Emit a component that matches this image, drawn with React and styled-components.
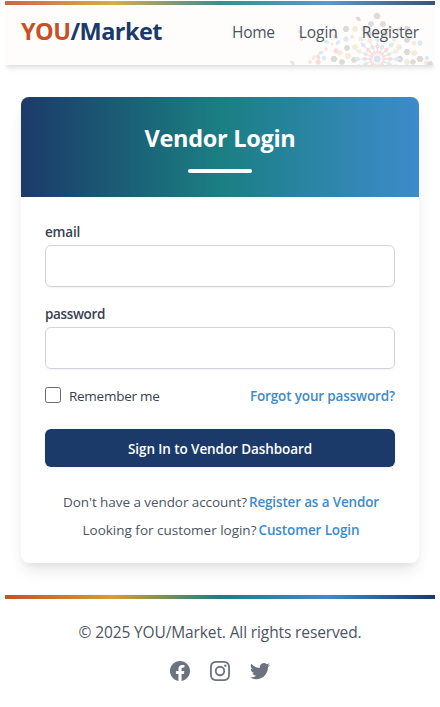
import React from "react";
import styled, { createGlobalStyle } from "styled-components";

const Global = createGlobalStyle`
  *, *::before, *::after { box-sizing: border-box; }
  html { background: #fff; overflow: hidden; }
  body {
    margin: 1px 5px 0;
    font-family: "Open Sans", "Noto Sans", sans-serif;
    color: #4b5563;
    -webkit-font-smoothing: antialiased;
  }
  a { color: inherit; text-decoration: none; }
  h1, p { margin: 0; }
`;

const Page = styled.div`
  display: flex;
  flex-direction: column;
  height: 706px;
`;

const Header = styled.header`
  position: relative;
  display: flex;
  align-items: center;
  justify-content: space-between;
  flex: none;
  height: 64px;
  padding: 0 16px;
  background: #fefdfb;
  box-shadow: 0 4px 6px -1px rgba(0, 0, 0, 0.1), 0 2px 4px -1px rgba(0, 0, 0, 0.06);
`;

const Stripe = styled.div`
  height: 4px;
  background: linear-gradient(to right, #c94f28, #d69e2e 25%, #1a7f82 50%, #3d8bcb 75%, #1c3a69);
`;

const HeaderStripe = styled(Stripe)`
  position: absolute;
  inset: 0 0 auto;
  opacity: 0.87;
`;

const Ornament = styled.svg`
  position: absolute;
  right: 0;
  bottom: 0;
  width: 150px;
  height: 60px;
  opacity: 0.19;
  pointer-events: none;
`;

const Logo = styled.a`
  display: flex;
  position: relative;
  padding-bottom: 5px;
  font-size: 23.5px;
  font-weight: 700;
  line-height: 32px;
`;

const LogoYou = styled.span`
  color: #c94f28;
  letter-spacing: -0.56px;
`;

const LogoMarket = styled.span`
  color: #1c3a69;
  letter-spacing: -0.57px;
`;

const Nav = styled.nav`
  position: relative;
  display: flex;
  gap: 24px;
  padding-bottom: 3px;
`;

const NavLink = styled.a`
  font-size: 15.5px;
  line-height: 24px;
  letter-spacing: ${(p) => p.$track}px;
`;

const Main = styled.main`
  flex: none;
  padding: 32px 16px;
`;

const Card = styled.section`
  height: 466px;
  overflow: hidden;
  border-radius: 8px;
  background: #fff;
  box-shadow: 0 10px 15px -3px rgba(0, 0, 0, 0.1), 0 4px 6px -2px rgba(0, 0, 0, 0.05);
`;

const CardHeader = styled.div`
  display: flex;
  flex-direction: column;
  align-items: center;
  height: 100px;
  padding-top: 24px;
  background: linear-gradient(to right, #1c3a69, #1a7f82 50%, #3d8bcb);
`;

const Title = styled.h1`
  color: #fff;
  font-size: 23.5px;
  font-weight: 700;
  line-height: 34px;
  height: 48px;
  letter-spacing: -0.29px;
`;

const TitleRule = styled.div`
  width: 64px;
  height: 4px;
  border-radius: 2px;
  background: #fff;
`;

const Form = styled.form`
  display: flex;
  flex-direction: column;
  padding: 24px;
`;

const Field = styled.label`
  display: block;
  height: 82px;
`;

const FieldLabel = styled.span`
  display: block;
  height: 24px;
  padding-top: 1px;
  color: #374151;
  font-size: 13.5px;
  font-weight: 600;
  line-height: 20px;
  letter-spacing: ${(p) => p.$track}px;
`;

const Input = styled.input`
  display: block;
  width: 100%;
  height: 42px;
  padding: 8px 12px;
  border: 1px solid #d1d5db;
  border-radius: 6px;
  background: #fff;
  font: inherit;
  box-shadow: 0 1px 2px rgba(0, 0, 0, 0.05);
`;

const Options = styled.div`
  display: flex;
  align-items: center;
  justify-content: space-between;
  height: 20px;
  padding-top: 2px;
  font-size: 13.5px;
  line-height: 20px;
`;

const Remember = styled.label`
  display: flex;
  align-items: center;
  gap: 8px;
  color: #374151;
  letter-spacing: -0.27px;
`;

const Checkbox = styled.input`
  appearance: none;
  width: 16px;
  height: 16px;
  margin: -2px 0 0;
  border: 1px solid #6b6b6b;
  border-radius: 2.5px;
  background: #fff;
`;

const TextLink = styled.a`
  color: #3d8bcb;
  font-weight: 600;
  letter-spacing: ${(p) => p.$track}px;
`;

const Submit = styled.button`
  height: 38px;
  margin: 24px 0 25px;
  padding: 2px 0 0;
  border: 0;
  border-radius: 6px;
  background: #1c3a69;
  color: #fff;
  font: 600 13.5px/20px "Open Sans", "Noto Sans", sans-serif;
  letter-spacing: -0.09px;
  box-shadow: 0 1px 2px rgba(0, 0, 0, 0.05);
`;

const Prompt = styled.p`
  display: flex;
  justify-content: center;
  gap: 2px;
  height: 28px;
  padding-left: 2px;
  font-size: 13.5px;
  line-height: 20px;
  white-space: nowrap;
`;

const PromptText = styled.span`
  letter-spacing: ${(p) => p.$track}px;
`;

const Footer = styled.footer`
  flex: 1;
  background: #fff;
  box-shadow: 0 0 2px rgba(0, 0, 0, 0.06);
`;

const FooterBody = styled.div`
  display: flex;
  flex-direction: column;
  align-items: center;
  gap: 15px;
  padding-top: 21px;
`;

const Copyright = styled.p`
  font-size: 15.5px;
  line-height: 24px;
  letter-spacing: -0.12px;
`;

const Socials = styled.div`
  display: flex;
  gap: 16px;
  color: #6b7280;
`;

const SocialIcon = styled.svg`
  display: block;
  width: 24px;
  height: 24px;
  fill: currentColor;
`;

const socials = [
  ["Facebook", "M22 12c0-5.523-4.477-10-10-10S2 6.477 2 12c0 4.991 3.657 9.128 8.438 9.878v-6.987h-2.54V12h2.54V9.797c0-2.506 1.492-3.89 3.777-3.89 1.094 0 2.238.195 2.238.195v2.46h-1.26c-1.243 0-1.63.771-1.63 1.562V12h2.773l-.443 2.89h-2.33v6.988C18.343 21.128 22 16.991 22 12z"],
  ["Instagram", "M12.315 2c2.43 0 2.784.013 3.808.06 1.064.049 1.791.218 2.427.465a4.902 4.902 0 011.772 1.153 4.902 4.902 0 011.153 1.772c.247.636.416 1.363.465 2.427.048 1.067.06 1.407.06 4.123v.08c0 2.643-.012 2.987-.06 4.043-.049 1.064-.218 1.791-.465 2.427a4.902 4.902 0 01-1.153 1.772 4.902 4.902 0 01-1.772 1.153c-.636.247-1.363.416-2.427.465-1.067.048-1.407.06-4.123.06h-.08c-2.643 0-2.987-.012-4.043-.06-1.064-.049-1.791-.218-2.427-.465a4.902 4.902 0 01-1.772-1.153 4.902 4.902 0 01-1.153-1.772c-.247-.636-.416-1.363-.465-2.427-.047-1.024-.06-1.379-.06-3.808v-.63c0-2.43.013-2.784.06-3.808.049-1.064.218-1.791.465-2.427a4.902 4.902 0 011.153-1.772A4.902 4.902 0 015.45 2.525c.636-.247 1.363-.416 2.427-.465C8.901 2.013 9.256 2 11.685 2h.63zm-.081 1.802h-.468c-2.456 0-2.784.011-3.807.058-.975.045-1.504.207-1.857.344-.467.182-.8.398-1.15.748-.35.35-.566.683-.748 1.15-.137.353-.3.882-.344 1.857-.047 1.023-.058 1.351-.058 3.807v.468c0 2.456.011 2.784.058 3.807.045.975.207 1.504.344 1.857.182.466.399.8.748 1.15.35.35.683.566 1.15.748.353.137.882.3 1.857.344 1.054.048 1.37.058 4.041.058h.08c2.597 0 2.917-.01 3.96-.058.976-.045 1.505-.207 1.858-.344.466-.182.8-.398 1.15-.748.35-.35.566-.683.748-1.15.137-.353.3-.882.344-1.857.048-1.055.058-1.37.058-4.041v-.08c0-2.597-.01-2.917-.058-3.96-.045-.976-.207-1.505-.344-1.858a3.097 3.097 0 00-.748-1.15 3.098 3.098 0 00-1.15-.748c-.353-.137-.882-.3-1.857-.344-1.023-.047-1.351-.058-3.807-.058zM12 6.865a5.135 5.135 0 110 10.27 5.135 5.135 0 010-10.27zm0 1.802a3.333 3.333 0 100 6.666 3.333 3.333 0 000-6.666zm5.338-3.205a1.2 1.2 0 110 2.4 1.2 1.2 0 010-2.4z"],
  ["Twitter", "M8.29 20.251c7.547 0 11.675-6.253 11.675-11.675 0-.178 0-.355-.012-.53A8.348 8.348 0 0022 5.92a8.19 8.19 0 01-2.357.646 4.118 4.118 0 001.804-2.27 8.224 8.224 0 01-2.605.996 4.107 4.107 0 00-6.993 3.743 11.65 11.65 0 01-8.457-4.287 4.106 4.106 0 001.27 5.477A4.072 4.072 0 012.8 9.713v.052a4.105 4.105 0 003.292 4.022 4.095 4.095 0 01-1.853.07 4.108 4.108 0 003.834 2.85A8.233 8.233 0 012 18.407a11.616 11.616 0 006.29 1.84"],
];

const BLUE = "#4aa3d6";
const RED = "#e04f5f";
const TAN = "#d0a468";
const BROWN = "#5f4a42";

/* Hexagonal tiles: [x, y, radius, colour] */
const tiles = [
  [92, 11, 3.6, BROWN], [86, 19, 3.2, BROWN], [98, 19, 3.2, BROWN], [79, 24, 3.2, TAN], [105, 24, 3.2, TAN],
  [61, 24, 3.4, BROWN], [70, 24, 3.2, TAN], [61, 34, 2.8, BLUE], [67, 32, 2.4, TAN], [92, 27, 3.2, TAN],
  [84, 29, 3.2, BROWN], [100, 29, 3.2, BROWN], [76, 34, 2.8, TAN], [109, 34, 2.8, TAN],
  [122, 24, 3.6, BROWN], [114, 25, 3.2, TAN], [122, 35, 3.2, BROWN], [129, 38, 2.6, TAN], [135, 38, 2.8, BLUE],
  [62, 43, 3.2, BROWN], [70, 42, 3.2, TAN], [114, 42, 3.2, TAN], [122, 47, 3.4, BROWN],
  [55, 48, 3, TAN], [63, 51, 3.4, TAN], [49, 54, 3.6, BROWN], [57, 57, 3.2, BROWN], [69, 55, 3.2, BROWN],
  [115, 54, 3.4, BROWN], [122, 57, 3.2, TAN], [129, 48, 3.2, TAN], [135, 54, 3.6, BROWN],
  [128, 57, 3, BROWN], [141, 58, 2.6, TAN], [142, 53, 2.4, BLUE], [51, 46, 2.8, RED], [41, 44, 2, TAN],
  [39, 53, 2.6, BLUE], [33, 57, 2.8, RED], [25, 57, 2.2, TAN], [47, 39, 1.8, TAN], [145, 59, 3.2, BROWN],
];

/* Loose leaf-shaped tiles: [x, y, rotation, colour] */
const leaves = [
  [73, 14, 40, BROWN], [50, 32, 30, RED], [53, 38, -50, BLUE], [41, 37, 20, BLUE], [36, 48, -20, BLUE],
  [33, 52, 70, RED], [7, 58, 40, BLUE], [16, 33, 80, RED], [15, 27, 10, BLUE], [29, 53, -40, TAN],
];

const hexagon = (x, y, r) =>
  [0, 1, 2, 3, 4, 5].map((i) => {
    const a = (i * Math.PI) / 3;
    return `${(x + r * Math.cos(a)).toFixed(1)},${(y + r * Math.sin(a)).toFixed(1)}`;
  }).join(" ");

function Mosaic() {
  return (
    <Ornament viewBox="0 0 150 60" aria-hidden="true">
      {tiles.map(([x, y, r, c], i) => <polygon key={i} points={hexagon(x, y, r)} fill={c} />)}
      {leaves.map(([x, y, a, c], i) => (
        <path key={i} d="M-3 0Q0 -4.5 3.5 0Q0 3 -3 0Z" fill={c} transform={`translate(${x} ${y}) rotate(${a})`} />
      ))}
      <g transform="translate(92.3 54)">
        {Array.from({ length: 16 }, (_, i) => (
          <g key={i} transform={`rotate(${i * 22.5})`}>
            <path d="M0 -4L1.4 -7L0 -10L-1.4 -7Z" fill={RED} />
            <path d="M0 -9L2.2 -12.5L0 -16.5L-2.2 -12.5Z" fill={i % 2 ? BLUE : RED} />
            <path d="M0 -16L2.6 -19.5L0 -23.5L-2.6 -19.5Z" fill={i % 2 ? TAN : BLUE} />
          </g>
        ))}
        <circle r="3.4" fill="#5877d0" />
      </g>
    </Ornament>
  );
}

export default function App() {
  return (
    <>
      <Global />
      <Page>
        <Header>
          <HeaderStripe />
          <Mosaic />
          <Logo href="#"><LogoYou>YOU</LogoYou><LogoMarket>/Market</LogoMarket></Logo>
          <Nav>
            <NavLink href="#" $track={-0.25}>Home</NavLink>
            <NavLink href="#" $track={-0.05}>Login</NavLink>
            <NavLink href="#" $track={-0.17}>Register</NavLink>
          </Nav>
        </Header>
        <Main>
          <Card>
            <CardHeader>
              <Title>Vendor Login</Title>
              <TitleRule />
            </CardHeader>
            <Form>
              <Field>
                <FieldLabel $track={-0.2}>email</FieldLabel>
                <Input type="email" />
              </Field>
              <Field>
                <FieldLabel $track={-0.36}>password</FieldLabel>
                <Input type="password" />
              </Field>
              <Options>
                <Remember><Checkbox type="checkbox" />Remember me</Remember>
                <TextLink href="#" $track={-0.15}>Forgot your password?</TextLink>
              </Options>
              <Submit type="button">Sign In to Vendor Dashboard</Submit>
              <Prompt>
                <PromptText $track={-0.07}>Don't have a vendor account?</PromptText>
                <TextLink href="#" $track={-0.16}>Register as a Vendor</TextLink>
              </Prompt>
              <Prompt>
                <PromptText $track={-0.01}>Looking for customer login?</PromptText>
                <TextLink href="#" $track={-0.12}>Customer Login</TextLink>
              </Prompt>
            </Form>
          </Card>
        </Main>
        <Footer>
          <Stripe />
          <FooterBody>
            <Copyright>© 2025 YOU/Market. All rights reserved.</Copyright>
            <Socials>
              {socials.map(([name, d]) => (
                <SocialIcon key={name} viewBox="0 0 24 24" role="img" aria-label={name}>
                  <path fillRule="evenodd" clipRule="evenodd" d={d} />
                </SocialIcon>
              ))}
            </Socials>
          </FooterBody>
        </Footer>
      </Page>
    </>
  );
}
